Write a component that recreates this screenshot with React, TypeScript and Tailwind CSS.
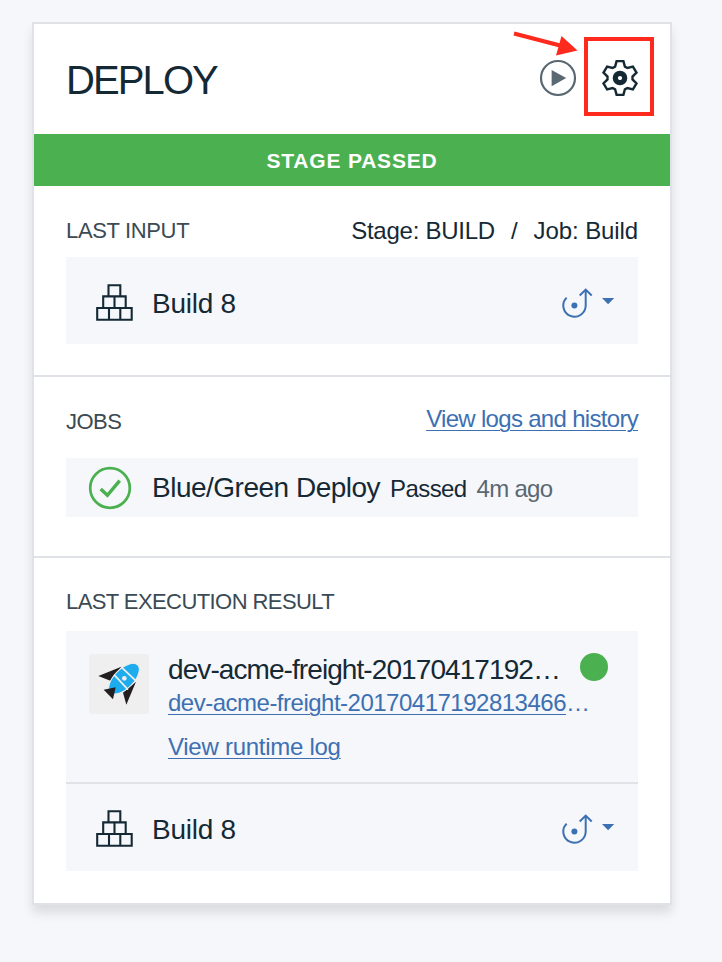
const ink = "#152935";

function BlocksIcon() {
  return (
    <svg width="38" height="38" viewBox="96 284 38 38" fill="none" stroke={ink} strokeWidth="2.1" className="shrink-0">
      <path d="M97.2 308H131.7V319.7H97.2ZM109 308V319.7M120.3 308V319.7M103.2 308V296.4H125.7V308M114.5 296.4V308M108.5 296.4V285.3H120.3V296.4" />
    </svg>
  );
}

function HookIcon() {
  return (
    <svg width="56" height="32" viewBox="560 287 56 32" fill="none" stroke="#3d70b2" strokeWidth="2" className="shrink-0">
      <path d="M566.6 297.6A11.2 11.2 0 1 0 585.7 305.3V289.8M579.7 295.5L585.7 289.6L591.7 295.5" />
      <circle cx="574.4" cy="305.4" r="3" fill="#3d70b2" stroke="none" />
      <path d="M602 298H614.2L608.1 304.2Z" fill="#3d70b2" stroke="none" />
    </svg>
  );
}

function GearIcon() {
  return (
    <svg width="38" height="38" viewBox="-19 -19 38 38" fill="none" stroke={ink} className="shrink-0">
      <path
        strokeWidth="2.4"
        d="M-3.4 -16.9L3.4 -16.9L4.9 -11.4L7.4 -10L12.9 -11.4L16.5 -5.5L12.5 -1.4V1.4L16.5 5.5L12.9 11.4L7.4 10L4.9 11.4L3.4 16.9L-3.4 16.9L-4.9 11.4L-7.4 10L-12.9 11.4L-16.5 5.5L-12.5 1.4V-1.4L-16.5 -5.5L-12.9 -11.4L-7.4 -10L-4.9 -11.4Z"
      />
      <circle r="4.7" strokeWidth="5.2" />
    </svg>
  );
}

function PlayIcon() {
  return (
    <svg width="38" height="38" viewBox="-19 -19 38 38" fill="none" className="shrink-0">
      <circle r="17" stroke="#5a6872" strokeWidth="2.2" />
      <path d="M-6.4 -8L8.2 0L-6.4 8.2Z" fill="#5a6872" />
    </svg>
  );
}

function RocketIcon() {
  return (
    <svg width="60" height="60" viewBox="27 42 180 180" className="shrink-0 rounded-[2px] bg-[#efefef]">
      <path d="M55 108L124 80L91 122ZM168 125L139 194L129 158Z" fill="#231f20" />
      <ellipse cx="132" cy="116" rx="58" ry="29" transform="rotate(-45 132 116)" fill="#1daced" stroke="#efefef" strokeWidth="3" />
      <path d="M102 104L144 149M125 82L167 122" stroke="#efefef" strokeWidth="5" />
      <circle cx="133" cy="115" r="7" fill="#efefef" />
      <path d="M71 149L107 142L99 178Z" fill="#231f20" />
    </svg>
  );
}

function BuildRow({ className }: { className: string }) {
  return (
    <div className={`flex h-[87px] items-start bg-[#f5f7fb] pr-[22px] pl-[30px] ${className}`}>
      <BlocksIcon />
      <span className="mt-px ml-[18px] grow text-[28px] leading-[38px] tracking-[-0.25px]">Build 8</span>
      <div className="mt-[3px]">
        <HookIcon />
      </div>
    </div>
  );
}

export default function App() {
  return (
    <div className="h-[962px] w-[722px] overflow-hidden bg-[#f5f7fb] px-8 pt-[22px] font-['Liberation_Sans',Arial,sans-serif] whitespace-nowrap text-[#152935]">
      <main className="h-[883px] w-[640px] border-2 border-[#dfe2e6] bg-white shadow-[0_8px_10px_rgba(0,0,0,0.11)]">
        <header className="relative flex h-[110px] items-start pl-8">
          <h1 className="mt-[32px] w-[472.5px] text-[40px] leading-[48px] tracking-[-1.9px]">DEPLOY</h1>
          <div className="mt-[34.5px] flex">
            <PlayIcon />
          </div>
          <div className="mt-[13px] ml-[7.5px] flex h-[79px] w-[70px] items-start border-4 border-[#fe2a1d] pt-[18px] pl-[13px]">
            <GearIcon />
          </div>
          <svg className="absolute top-0 left-[476px]" width="72" height="40" viewBox="510 24 72 40">
            <path d="M514 33.5L562 46" stroke="#fe2a1d" strokeWidth="4" />
            <path d="M577.5 50.5L561.5 36L556 55.5Z" fill="#fe2a1d" />
          </svg>
        </header>
        <div className="h-[52px] bg-[#4bb04f] text-center text-[21px] leading-[53px] font-bold tracking-[0.8px] text-white">STAGE PASSED</div>

        <section className="h-[191px] border-b-2 border-[#dfe2e6] px-8">
          <div className="flex h-[71px] justify-between pt-[31px] leading-[28px]">
            <h2 className="text-[22px] tracking-[-0.35px] text-[#3b4a54]">LAST INPUT</h2>
            <div className="flex gap-4 text-[24px]">
              <span className="tracking-[-0.25px]">Stage: BUILD</span>
              <span>/</span>
              <span className="tracking-[-0.1px]">Job: Build</span>
            </div>
          </div>
          <BuildRow className="pt-[27px]" />
        </section>

        <section className="h-[181px] border-b-2 border-[#dfe2e6] px-8">
          <div className="flex h-[81px] justify-between">
            <h2 className="mt-[31px] text-[22px] leading-[28px] tracking-[-0.5px] text-[#3b4a54]">JOBS</h2>
            <a className="mt-[28px] text-[24px] leading-[28px] tracking-[-0.69px] text-[#3d70b2] underline decoration-1 underline-offset-[3px]">View logs and history</a>
          </div>
          <div className="flex h-[59px] items-baseline bg-[#f5f7fb] pl-[22px]">
            <svg width="44" height="44" viewBox="-22 -22 44 44" fill="none" stroke="#4bb04f" className="mt-[7.5px] shrink-0 self-start">
              <circle r="19.8" strokeWidth="2.7" />
              <path d="M-9.3 1.1L-2.6 7.3L9.7 -7.4" strokeWidth="3.4" />
            </svg>
            <span className="ml-[20px] text-[28px] leading-[59px] tracking-[-0.5px]">Blue/Green Deploy</span>
            <span className="ml-[10px] text-[24px] tracking-[-0.6px]">Passed</span>
            <span className="ml-[10px] text-[24px] tracking-[-0.7px] text-[#5a6872]">4m ago</span>
          </div>
        </section>

        <section className="px-8">
          <h2 className="h-[73px] pt-[30px] text-[22px] leading-[28px] tracking-[-0.58px] text-[#3b4a54]">LAST EXECUTION RESULT</h2>
          <div className="flex h-[153px] items-start border-b-2 border-[#dfe2e6] bg-[#f5f7fb] pt-[22px] pl-[23px]">
            <div className="mt-[1px]">
              <RocketIcon />
            </div>
            <div className="ml-[19px] w-[412px]">
              <div className="pt-px text-[28px] leading-[32px] tracking-[-0.92px]">dev-acme-freight-20170417192…</div>
              <div className="mt-px text-[24px] leading-[32px] tracking-[-0.5px] text-[#3d70b2]">
                <a className="underline decoration-1 underline-offset-[3px]">dev-acme-freight-20170417192813466</a>…
              </div>
              <a className="mt-[12px] block text-[24px] leading-[32px] tracking-[-0.27px] text-[#3d70b2] underline decoration-1 underline-offset-[3px]">View runtime log</a>
            </div>
            <span className="h-7 w-7 shrink-0 rounded-full bg-[#4bb04f]" />
          </div>
          <BuildRow className="pt-[26px]" />
        </section>
      </main>
    </div>
  );
}
